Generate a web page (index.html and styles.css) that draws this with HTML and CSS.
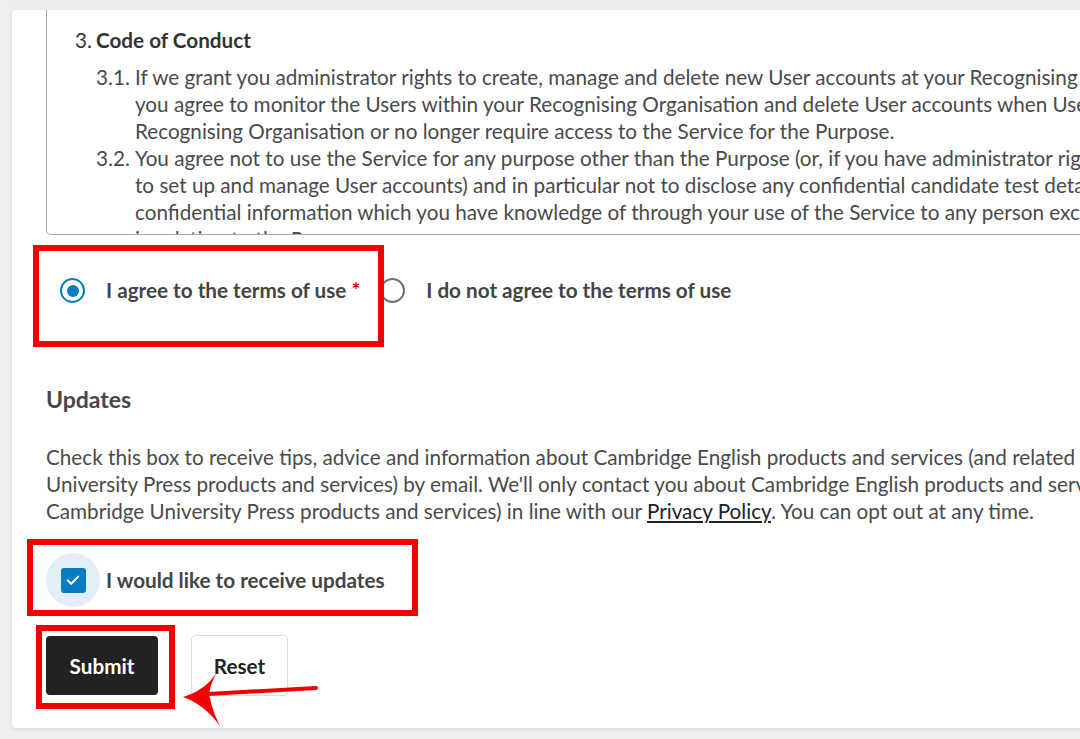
FILE: index.html
```html
<!DOCTYPE html>
<html lang="en">
<head>
    <meta charset="UTF-8">
    <meta name="viewport" content="width=device-width, initial-scale=1.0">
    <title>Terms of use</title>
    <link rel="stylesheet" href="styles.css">
</head>
<body>
    <div class="page">
        <div class="card">
            <div class="terms">
                <div class="terms-head"><span class="num">3.</span><strong>Code of Conduct</strong></div>
                <ol class="sub">
                    <li>
                        <span class="num">3.1.</span>
                        <span>If we grant you administrator rights to create, manage and delete new User accounts at your Recognising Organisation,<br>you agree to monitor the Users within your Recognising Organisation and delete User accounts when Users leave your<br>Recognising Organisation or no longer require access to the Service for the Purpose.</span>
                    </li>
                    <li>
                        <span class="num">3.2.</span>
                        <span>You agree not to use the Service for any purpose other than the Purpose (or, if you have administrator rights, in order<br>to set up and manage User accounts) and in particular not to disclose any confidential candidate test details or other<br>confidential information which you have knowledge of through your use of the Service to any person except<br>in relation to the Purpose.</span>
                    </li>
                </ol>
            </div>

            <div class="radios">
                <label class="radio">
                    <span class="radio-dot checked"></span>
                    <span>I agree to the terms of use <span class="req">*</span></span>
                </label>
                <label class="radio">
                    <span class="radio-dot"></span>
                    <span>I do not agree to the terms of use</span>
                </label>
            </div>

            <h2 class="updates-title">Updates</h2>
            <p class="updates-text">
                Check this box to receive tips, advice and information about Cambridge English products and services (and related Cambridge<br>
                University Press products and services) by email. We'll only contact you about Cambridge English products and services (and<br>
                Cambridge University Press products and services) in line with our <a href="#">Privacy Policy</a>. You can opt out at any time.
            </p>

            <label class="check">
                <span class="check-halo">
                    <span class="check-box">
                        <svg viewBox="0 0 24 24" width="18" height="18"><path d="M5 12.5l4.5 4.5L19 7.5" fill="none" stroke="#fff" stroke-width="2.6" stroke-linecap="round" stroke-linejoin="round"/></svg>
                    </span>
                </span>
                <span>I would like to receive updates</span>
            </label>

            <div class="actions">
                <button type="button" class="btn btn-dark">Submit</button>
                <button type="button" class="btn btn-light">Reset</button>
            </div>

            <!-- annotations drawn over the form -->
            <div class="mark mark-agree"></div>
            <div class="mark mark-updates"></div>
            <div class="mark mark-submit"></div>
            <svg class="arrow" viewBox="0 0 160 70" width="160" height="70">
                <path d="M146 28 L38 34" stroke="#f20000" stroke-width="4" stroke-linecap="round"/>
                <path d="M13 37 Q36 30 47 12 Q37 31 40 38 Q42 50 50 66 Q34 44 13 37 Z" fill="#f20000"/>
            </svg>
        </div>
    </div>
</body>
</html>
```

FILE: styles.css
```css
* {
    box-sizing: border-box;
}

body {
    margin: 0;
    height: 739px;
    overflow: hidden;
    background: #efefef;
    font-family: Lato, 'Source Sans Pro', 'Liberation Sans', sans-serif;
    color: #4a4a4a;
}

.page {
    padding: 10px 0 0 12px;
}

.card {
    position: relative;
    width: 1200px;
    height: 718px;
    padding-left: 34px;
    background: #fff;
    border-radius: 4px;
    box-shadow: 0 1px 4px rgba(0, 0, 0, 0.12);
    overflow: hidden;
}

.terms {
    width: 1150px;
    height: 225px;
    padding: 17px 0 0 28px;
    border: 1px solid #a9a9a9;
    border-top: none;
    border-radius: 0 0 5px 5px;
    overflow: hidden;
    font-size: 20.7px;
    line-height: 27px;
    white-space: nowrap;
}

.terms-head {
    display: flex;
    margin-bottom: 10px;
    color: #333;
}

.terms-head .num {
    width: 21px;
}

.sub {
    list-style: none;
    margin: 0;
    padding-left: 21px;
}

.sub li {
    display: flex;
}

.sub .num {
    flex: none;
    width: 39px;
}

.radios {
    display: flex;
    gap: 20px;
    margin-top: 42px;
}

.radio {
    display: flex;
    align-items: center;
    gap: 21px;
    padding-left: 14px;
    font-size: 20.7px;
    line-height: 27px;
    font-weight: 700;
    color: #444;
}

.radios .radio + .radio {
    padding-left: 0;
}

.radio-dot {
    display: flex;
    align-items: center;
    justify-content: center;
    width: 25px;
    height: 25px;
    border: 2.5px solid #6f6f6f;
    border-radius: 50%;
}

.radio-dot.checked {
    border-color: #0b7cc1;
}

.radio-dot.checked::after {
    content: '';
    width: 12px;
    height: 12px;
    border-radius: 50%;
    background: #0b7cc1;
}

.req {
    color: #d9001b;
}

.updates-title {
    margin: 80px 0 0;
    font-size: 23px;
    line-height: 30px;
    font-weight: 700;
    color: #474747;
}

.updates-text {
    margin: 30px 0 0;
    font-size: 20.7px;
    line-height: 27px;
    white-space: nowrap;
}

.updates-text a {
    color: #222;
    text-decoration: underline;
}

.check {
    display: flex;
    align-items: center;
    gap: 6px;
    margin-top: 28px;
    font-size: 20.7px;
    font-weight: 700;
    color: #444;
}

.check-halo {
    display: flex;
    align-items: center;
    justify-content: center;
    width: 54px;
    height: 54px;
    border-radius: 50%;
    background: #e4eef8;
}

.check-box {
    display: flex;
    align-items: center;
    justify-content: center;
    width: 25px;
    height: 25px;
    border-radius: 3px;
    background: #0b7cc1;
}

.actions {
    display: flex;
    align-items: center;
    gap: 33px;
    margin-top: 28px;
}

.btn {
    font-family: inherit;
    font-size: 20.7px;
    font-weight: 700;
    border-radius: 4px;
    cursor: pointer;
}

.btn-dark {
    width: 112px;
    height: 59px;
    border: none;
    background: #222;
    color: #fff;
}

.btn-light {
    width: 97px;
    height: 61px;
    border: 1px solid #dcdcdc;
    background: #fff;
    color: #222;
}

.mark {
    position: absolute;
    border: 6px solid #f20000;
}

.mark-agree {
    left: 21px;
    top: 235px;
    width: 351px;
    height: 102px;
}

.mark-updates {
    left: 15px;
    top: 529px;
    width: 391px;
    height: 77px;
}

.mark-submit {
    left: 24px;
    top: 615px;
    width: 139px;
    height: 84px;
}

.arrow {
    position: absolute;
    left: 158px;
    top: 650px;
}
```
